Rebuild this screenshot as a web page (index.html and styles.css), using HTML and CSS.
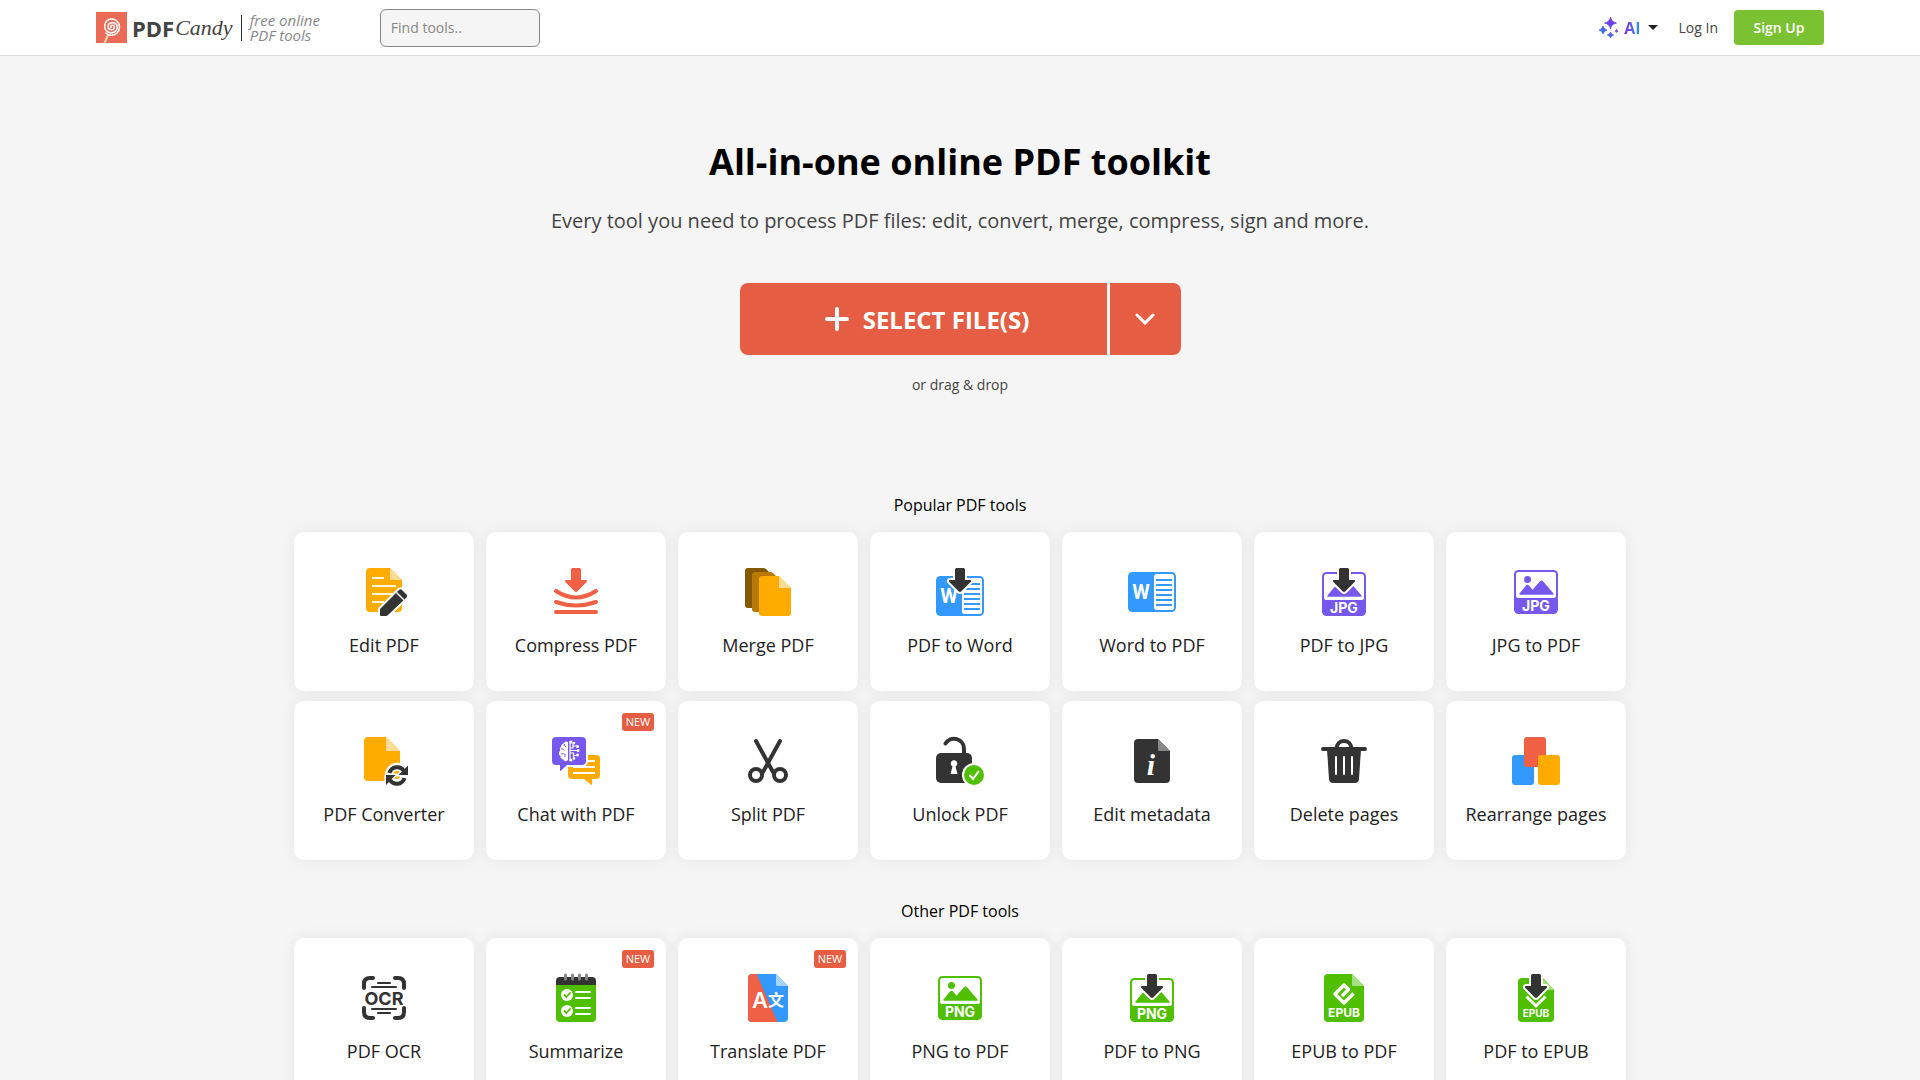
FILE: index.html
```html
<!DOCTYPE html>
<html lang="en">
<head>
    <meta charset="UTF-8">
    <meta name="viewport" content="width=device-width, initial-scale=1.0">
    <title>PDF Candy - All-in-one online PDF toolkit</title>
    <link rel="stylesheet" href="styles.css">
</head>
<body>
    <!-- shared icon parts -->
    <svg class="defs" width="0" height="0" aria-hidden="true">
        <defs>
            <linearGradient id="ai-grad" x1="1" y1="0" x2="0" y2="1">
                <stop offset="0" stop-color="#8a2be2"/>
                <stop offset=".5" stop-color="#5b4bea"/>
                <stop offset="1" stop-color="#1e9be8"/>
            </linearGradient>
            <symbol id="arrow" viewBox="0 0 48 48">
                <path d="M20.500 0h7q1.500 0 1.500 1.500V12h5q2 .4 .6 2L25.400 23.300q-1.400 1.400-2.800 0L13.400 14q-1.400-1.600 .6-2h5V1.500Q19 0 20.500 0z"/>
            </symbol>
            <symbol id="word" viewBox="0 0 48 48">
                <rect y="4" width="48" height="40" rx="4.500" fill="#39f"/>
                <rect x="26" y="6" width="20" height="36" rx="2.500" fill="#fff"/>
                <path d="M28 12h16M28 17h16M28 22h16M28 27h16M28 32h16M28 37h16" stroke="#39f" stroke-width="2"/>
                <text x="13" y="31" class="t-word">W</text>
            </symbol>
            <symbol id="picture" viewBox="0 0 48 48">
                <rect x="2" y="2" width="44" height="44" rx="4.500" fill="currentColor"/>
                <rect x="4" y="4" width="40" height="26" rx="2.500" fill="#fff"/>
                <circle cx="15.500" cy="11.500" r="3.500" fill="currentColor"/>
                <path d="M8.500 26.700q-2 0-.8-1.500L14 17.500q1.500-1.500 3 0l3.500 4.300L28 13.300q1.500-1.600 3 0l10.300 11.900q1.200 1.500-.8 1.500z" fill="currentColor"/>
            </symbol>
        </defs>
    </svg>

    <header class="header">
        <a class="logo" href="#">
            <svg width="31" height="31" viewBox="0 0 31 31" fill="none" aria-hidden="true">
                <rect width="31" height="31" fill="#ec6b56"/>
                <path d="M12 23L8.500 31" stroke="#f9d9b0" stroke-width="2"/>
                <path d="M15 15.500c-1-2.500 2.800-3.500 3.300-.5.400 3.500-6 4-6.300-.4C11.800 9.500 20.800 9 21.200 15c.2 5-6 7.500-9.700 4.700-5-3.600-3-12.200 3.700-12.700 4.600-.2 8.300 3.500 8.300 8 0 4.800-3.800 8.300-8.300 8.300-2 0-4-.8-5.500-2.300" stroke="#fff" stroke-width="1.500" stroke-linecap="round"/>
            </svg>
            <span class="logo-pdf">PDF</span>
            <span class="logo-candy">Candy</span>
            <span class="divider"></span>
            <span class="slogan">free online<br>PDF tools</span>
        </a>
        <input class="search" type="search" placeholder="Find tools.." aria-label="Find tools">
        <nav class="user-menu">
            <button class="ai-btn" type="button">
                <svg width="20" height="22" viewBox="0 0 20 22" fill="url(#ai-grad)" aria-hidden="true">
                    <path d="M11.500 0Q12.300 5.200 17.500 6 12.300 6.800 11.500 12 10.700 6.800 5.500 6 10.700 5.200 11.500 0zM4 9Q4.800 12.200 8 13 4.800 13.800 4 17 3.200 13.800 0 13 3.200 12.200 4 9zM11.500 15Q12 17.500 14.500 18 12 18.500 11.500 21 11 18.500 8.500 18 11 17.500 11.500 15zM17.500 12.500Q17.800 13.700 19 14 17.800 14.300 17.500 15.500 17.200 14.300 16 14 17.200 13.700 17.500 12.500z" stroke="url(#ai-grad)" stroke-width=".8" stroke-linejoin="round"/>
                </svg>
                <span class="ai-text">AI</span>
                <span class="caret"></span>
            </button>
            <a class="login" href="#">Log In</a>
            <button class="signup" type="button">Sign Up</button>
        </nav>
    </header>

    <main>
        <section class="hero">
            <h1>All-in-one online PDF toolkit</h1>
            <p class="subtitle">Every tool you need to process PDF files: edit, convert, merge, compress, sign and more.</p>
            <div class="upload">
                <button class="select-files" type="button">
                    <svg width="24" height="24" viewBox="0 0 24 24" aria-hidden="true"><path d="M12 2v20M2 12h20" stroke="#fff" stroke-width="4" stroke-linecap="round"/></svg>
                    SELECT FILE(S)
                </button>
                <button class="select-more" type="button" aria-label="More sources">
                    <svg width="20" height="12" viewBox="0 0 20 12" fill="none" aria-hidden="true"><path d="M2 2l8 8 8-8" stroke="#fff" stroke-width="3" stroke-linecap="round"/></svg>
                </button>
            </div>
            <p class="drop-hint">or drag &amp; drop</p>
        </section>

        <section class="tools">
            <h2>Popular PDF tools</h2>
            <div class="grid">
                <a class="tool" href="#">
                    <svg class="icon" viewBox="0 0 48 48">
                        <path d="M10 0h20l12 12v28a4 4 0 0 1-4 4H10a4 4 0 0 1-4-4V4a4 4 0 0 1 4-4z" fill="#ffab00"/>
                        <path d="M30 0l12 12H31q-1 0-1-1z" fill="#ffdc96"/>
                        <path d="M12 10h12M12 18h24M12 26h24M12 34h12" stroke="#fff8d8" stroke-width="2"/>
                        <path d="M20 47v-6l19-19q1.500-1.500 3 0l4.500 4.500q1.500 1.500 0 3L28 47q-1 1-2 1h-5q-1 0-1-1z" fill="#333" stroke="#fff" stroke-width="4" paint-order="stroke"/>
                        <path d="M36.500 24.500l7.500 7.500" stroke="#fff" stroke-width="1.500"/>
                    </svg>
                    <span>Edit PDF</span>
                </a>
                <a class="tool" href="#">
                    <svg class="icon" viewBox="0 0 48 48" fill="none">
                        <use href="#arrow" fill="#f06045"/>
                        <path d="M4 23Q24 36 44 23M4 34q20 7 40 0M4 44h40" stroke="#f06045" stroke-width="4" stroke-linecap="round"/>
                    </svg>
                    <span>Compress PDF</span>
                </a>
                <a class="tool" href="#">
                    <svg class="icon" viewBox="0 0 48 48">
                        <path d="M4 0h15q2 0 3 1l11 11v28H4a3 3 0 0 1-3-3V3a3 3 0 0 1 3-3z" fill="#855800"/>
                        <path d="M11 4h15q2 0 3 1l11 11v28H11a3 3 0 0 1-3-3V7a3 3 0 0 1 3-3z" fill="#b87900"/>
                        <path d="M18 8h17l12 12v25a3 3 0 0 1-3 3H18a3 3 0 0 1-3-3V11a3 3 0 0 1 3-3z" fill="#ffab00"/>
                        <path d="M35 8l12 12H36q-1 0-1-1z" fill="#ffdc96"/>
                    </svg>
                    <span>Merge PDF</span>
                </a>
                <a class="tool" href="#">
                    <svg class="icon" viewBox="0 0 48 48">
                        <use href="#word" y="4"/>
                        <use href="#arrow" class="dark-arrow"/>
                    </svg>
                    <span>PDF to Word</span>
                </a>
                <a class="tool" href="#">
                    <svg class="icon" viewBox="0 0 48 48"><use href="#word"/></svg>
                    <span>Word to PDF</span>
                </a>
                <a class="tool" href="#">
                    <svg class="icon purple" viewBox="0 0 48 48">
                        <use href="#picture" y="2"/>
                        <text x="24" y="45" class="t-pic">JPG</text>
                        <use href="#arrow" class="dark-arrow"/>
                    </svg>
                    <span>PDF to JPG</span>
                </a>
                <a class="tool" href="#">
                    <svg class="icon purple" viewBox="0 0 48 48">
                        <use href="#picture"/>
                        <text x="24" y="43" class="t-pic">JPG</text>
                    </svg>
                    <span>JPG to PDF</span>
                </a>
                <a class="tool" href="#">
                    <svg class="icon" viewBox="0 0 48 48">
                        <path d="M8 0h18l14 14v26a4 4 0 0 1-4 4H8a4 4 0 0 1-4-4V4a4 4 0 0 1 4-4z" fill="#ffab00"/>
                        <path d="M26 0l14 14H27q-1 0-1-1z" fill="#ffdc96"/>
                        <g stroke="#fff" stroke-width="8" fill="none"><path d="M29 37a8 8 0 0 1 15-3M44.500 39a8 8 0 0 1-15 3"/></g>
                        <path d="M48 28.500v9.500h-9.500zM26 48v-10h9.500z" fill="#333" stroke="#fff" stroke-width="3" paint-order="stroke"/>
                        <path d="M29.500 36a8 8 0 0 1 14.500-2M44.500 41a8 8 0 0 1-14.500 2" fill="none" stroke="#333" stroke-width="4"/>
                    </svg>
                    <span>PDF Converter</span>
                </a>
                <a class="tool" href="#">
                    <em class="badge">NEW</em>
                    <svg class="icon" viewBox="0 0 48 48" fill="none">
                        <path d="M20 18h24a4 4 0 0 1 4 4v16a4 4 0 0 1-4 4h-4v5q0 1.500-1.200.6L32 42H20a4 4 0 0 1-4-4V22a4 4 0 0 1 4-4z" fill="#ffab00"/>
                        <path d="M21 24h22M21 30h22M21 36h22" stroke="#fff" stroke-width="2"/>
                        <path d="M4 0h26a4 4 0 0 1 4 4v20a4 4 0 0 1-4 4H15l-5.800 5.500Q8 34.500 8 33v-5H4a4 4 0 0 1-4-4V4a4 4 0 0 1 4-4z" fill="#7659ec" stroke="#fff" stroke-width="4" paint-order="stroke"/>
                        <path d="M16 5v18q-2 2-4 .5-.5-1.500-2-1.500-2-.5-1.500-3-2-1-1.500-3 .2-1.500 1-2-.8-3 1-4 0-3 2.500-3.500Q13.500 3.500 16 5z" fill="#fff"/>
                        <path d="M12.500 7q-.5 2 1.500 3M9 12q2-1 3 1.500M9 17q2.500-1 4 .5M13 20q-1-1.500 1-2.500" stroke="#7659ec"/>
                        <path d="M18 4v20M18 11h3V6M18 13.500h8M18 16h3.500v5M21 9h4M21 18.500h4" stroke="#fff" stroke-width="1.200"/>
                        <g fill="#fff"><circle cx="19" cy="5" r="1.500"/><circle cx="22" cy="6" r="1.300"/><circle cx="25.500" cy="9.500" r="1.500"/><circle cx="26" cy="13.500" r="1.500"/><circle cx="25.500" cy="18" r="1.500"/><circle cx="22" cy="21.500" r="1.300"/><circle cx="19" cy="23" r="1.500"/></g>
                    </svg>
                    <span>Chat with PDF</span>
                </a>
                <a class="tool" href="#">
                    <svg class="icon" viewBox="0 0 48 48" fill="none" stroke="#333" stroke-width="4" stroke-linecap="round">
                        <path d="M12 4l17 31M36 4L19 35"/>
                        <circle cx="12" cy="38" r="6"/><circle cx="36" cy="38" r="6"/>
                    </svg>
                    <span>Split PDF</span>
                </a>
                <a class="tool" href="#">
                    <svg class="icon" viewBox="0 0 48 48" fill="none" stroke-linecap="round">
                        <rect y="16" width="36" height="30" rx="5" fill="#333"/>
                        <path d="M28 18v-6A10 10 0 0 0 9.500 6.500" stroke="#333" stroke-width="4"/>
                        <path d="M16.500 29.500a3.300 3.300 0 1 1 3 0l2 7.500h-7z" fill="#fff"/>
                        <circle cx="38" cy="38" r="12" fill="#fff"/>
                        <circle cx="38" cy="38" r="10" fill="#4fbf00"/>
                        <path d="M34 38.500l3 3.500 5.500-7.500" stroke="#fff" stroke-width="2"/>
                    </svg>
                    <span>Unlock PDF</span>
                </a>
                <a class="tool" href="#">
                    <svg class="icon" viewBox="0 0 48 48">
                        <path d="M10 2h20l12 12v28a4 4 0 0 1-4 4H10a4 4 0 0 1-4-4V6a4 4 0 0 1 4-4z" fill="#333"/>
                        <path d="M30 2l12 12H31q-1 0-1-1z" fill="#888"/>
                        <text x="23" y="38" class="t-info">i</text>
                    </svg>
                    <span>Edit metadata</span>
                </a>
                <a class="tool" href="#">
                    <svg class="icon" viewBox="0 0 48 48" fill="none" stroke-linecap="round">
                        <path d="M3 12h42M16.500 11c1-9.500 14-9.500 15 0" stroke="#333" stroke-width="4"/>
                        <path d="M7 12h34l-2 30q-.4 4-4 4H13q-3.600 0-4-4z" fill="#333"/>
                        <path d="M16 20v17M24 20v17M32 20v17" stroke="#fff" stroke-width="2"/>
                    </svg>
                    <span>Delete pages</span>
                </a>
                <a class="tool" href="#">
                    <svg class="icon" viewBox="0 0 48 48">
                        <rect y="18" width="22" height="30" rx="3" fill="#39f"/>
                        <rect x="12" width="22" height="30" rx="3" fill="#f06045"/>
                        <rect x="26" y="18" width="22" height="30" rx="3" fill="#ffab00"/>
                    </svg>
                    <span>Rearrange pages</span>
                </a>
            </div>
        </section>

        <section class="tools">
            <h2>Other PDF tools</h2>
            <div class="grid">
                <a class="tool" href="#">
                    <svg class="icon" viewBox="0 0 48 48" stroke-linecap="round">
                        <path d="M4 14v-4q0-6 6-6h3M35 4h3q6 0 6 6v4M4 34v4q0 6 6 6h3M35 44h3q6 0 6-6v-4" fill="none" stroke="#333" stroke-width="4"/>
                        <path d="M18 9h12M12 13h24M12 35h24M18 39h12" stroke="#333" stroke-width="2"/>
                        <text x="24" y="31" class="t-ocr">OCR</text>
                    </svg>
                    <span>PDF OCR</span>
                </a>
                <a class="tool" href="#">
                    <em class="badge">NEW</em>
                    <svg class="icon" viewBox="0 0 48 48" fill="none" stroke-linecap="round">
                        <path d="M4 11V7a4 4 0 0 1 4-4h32a4 4 0 0 1 4 4v4z" fill="#333"/>
                        <path d="M4 11h40v33a4 4 0 0 1-4 4H8a4 4 0 0 1-4-4z" fill="#4fbf00"/>
                        <path d="M13.500 1v4M20.500 1v4M27.500 1v4M34.500 1v4" stroke="#888" stroke-width="3"/>
                        <circle cx="15" cy="21" r="6" fill="#fff"/><circle cx="15" cy="37" r="6" fill="#fff"/>
                        <path d="M12.500 21l2 2 3.500-4M12.500 37l2 2 3.500-4" stroke="#4fbf00" stroke-width="1.800"/>
                        <path d="M24 18h14M24 24h14M24 34h14M24 40h14" stroke="#fff" stroke-width="2"/>
                    </svg>
                    <span>Summarize</span>
                </a>
                <a class="tool" href="#">
                    <em class="badge">NEW</em>
                    <svg class="icon" viewBox="0 0 48 48">
                        <path d="M8 0h24l12 12v32a4 4 0 0 1-4 4H8a4 4 0 0 1-4-4V4a4 4 0 0 1 4-4z" fill="#39f"/>
                        <path d="M8 0h4.500l21 48H8a4 4 0 0 1-4-4V4a4 4 0 0 1 4-4z" fill="#f06045"/>
                        <path d="M32 0l12 12H33q-1 0-1-1z" fill="#a8d2ff"/>
                        <text x="16" y="34" class="t-latin">A</text>
                        <text x="32" y="32" class="t-cjk">文</text>
                    </svg>
                    <span>Translate PDF</span>
                </a>
                <a class="tool" href="#">
                    <svg class="icon green" viewBox="0 0 48 48">
                        <use href="#picture"/>
                        <text x="24" y="43" class="t-pic">PNG</text>
                    </svg>
                    <span>PNG to PDF</span>
                </a>
                <a class="tool" href="#">
                    <svg class="icon green" viewBox="0 0 48 48">
                        <use href="#picture" y="2"/>
                        <text x="24" y="45" class="t-pic">PNG</text>
                        <use href="#arrow" class="dark-arrow"/>
                    </svg>
                    <span>PDF to PNG</span>
                </a>
                <a class="tool" href="#">
                    <svg class="icon" viewBox="0 0 48 48">
                        <path d="M8 0h24l12 12v32a4 4 0 0 1-4 4H8a4 4 0 0 1-4-4V4a4 4 0 0 1 4-4z" fill="#4fbf00"/>
                        <path d="M32 0l12 12H33q-1 0-1-1z" fill="#a7df80"/>
                        <path d="M22 22l6.500-6.500L24 11l-9 9 9 9 9.500-9.500" fill="none" stroke="#fff" stroke-width="3.500" stroke-linejoin="round"/>
                        <text x="24" y="43" class="t-epub">EPUB</text>
                    </svg>
                    <span>EPUB to PDF</span>
                </a>
                <a class="tool" href="#">
                    <svg class="icon" viewBox="0 0 48 48">
                        <path d="M10 4h21l11 12v28a4 4 0 0 1-4 4H10a4 4 0 0 1-4-4V8a4 4 0 0 1 4-4z" fill="#4fbf00"/>
                        <path d="M31 5l11 11H31z" fill="#a7df80"/>
                        <path d="M14.500 22.500L24 32l9.500-9.500" fill="none" stroke="#fff" stroke-width="3"/>
                        <text x="24" y="43" class="t-epub small">EPUB</text>
                        <use href="#arrow" class="dark-arrow"/>
                    </svg>
                    <span>PDF to EPUB</span>
                </a>
            </div>
        </section>
    </main>
</body>
</html>
```
FILE: styles.css
```css
:root {
    --red: #e55d43;
    --green: #7ac231;
    --background: #f5f5f5;
}

* {
    box-sizing: border-box;
}

body {
    margin: 0;
    font-family: "Open Sans", sans-serif;
    color: #222;
    background: var(--background);
}

button {
    font-family: inherit;
    border: none;
    cursor: pointer;
}

a {
    color: inherit;
    text-decoration: none;
}

.defs {
    position: absolute;
}

/* header */
.header {
    display: flex;
    align-items: center;
    height: 56px;
    padding: 0 5%;
    background: #fff;
    border-bottom: 1px solid #ddd;
}

.logo {
    display: flex;
    align-items: center;
    color: #444;
}

.logo-pdf {
    margin-left: 5px;
    font-size: 22px;
    font-weight: 700;
}

.logo-candy {
    margin-left: 1px;
    font-family: "Liberation Serif", serif;
    font-size: 22px;
    font-style: italic;
}

.divider {
    width: 1px;
    height: 26px;
    margin: 0 8px;
    background: #333;
}

.slogan {
    font-size: 15px;
    line-height: 15px;
    font-style: italic;
    color: #888;
}

.search {
    width: 160px;
    height: 38px;
    margin-left: 60px;
    padding: 0 10px;
    border: 1px solid #888;
    border-radius: 6px;
    background: var(--background);
    font-family: inherit;
    font-size: 14px;
}

.search::placeholder {
    color: #888;
}

.user-menu {
    display: flex;
    align-items: center;
    margin-left: auto;
    font-size: 14px;
    color: #444;
}

.ai-btn {
    display: flex;
    align-items: center;
    gap: 5px;
    margin-right: 21px;
    padding: 0;
    background: none;
}

.ai-text {
    font-size: 16px;
    font-weight: 700;
    color: transparent;
    background: linear-gradient(90deg, #8a2be2, #1ea0e8);
    -webkit-background-clip: text;
    background-clip: text;
}

.caret {
    margin-left: 2px;
    border: 5px solid transparent;
    border-top-color: #222;
    border-bottom: 0;
}

.signup {
    width: 90px;
    height: 35px;
    margin-left: 16px;
    border-radius: 4px;
    background: var(--green);
    color: #fff;
    font-size: 14px;
    font-weight: 600;
}

/* hero */
.hero {
    padding-top: 80px;
    text-align: center;
}

h1 {
    margin: 0;
    font-size: 36px;
    line-height: 52px;
    color: #000;
}

.subtitle {
    margin: 18px 0 47px;
    font-size: 20px;
    line-height: 30px;
    color: #444;
}

.upload {
    display: flex;
    justify-content: center;
    gap: 3px;
}

.select-files,
.select-more {
    display: flex;
    align-items: center;
    justify-content: center;
    height: 72px;
    background: var(--red);
}

.select-files {
    gap: 14px;
    width: 367px;
    padding: 0 0 0 8px;
    border-radius: 8px 0 0 8px;
    color: #fff;
    font-size: 24px;
    font-weight: 700;
}

.select-more {
    width: 71px;
    border-radius: 0 8px 8px 0;
}

.drop-hint {
    margin: 20px 0 98px;
    font-size: 14px;
    line-height: 20px;
    color: #444;
}

/* tools */
.tools {
    padding: 0 20px;
    margin-bottom: 39px;
}

h2 {
    margin: 0 0 15px;
    font-size: 16px;
    line-height: 24px;
    font-weight: 400;
    text-align: center;
    color: #000;
}

.grid {
    display: grid;
    grid-template-columns: repeat(auto-fit, 180px);
    justify-content: center;
    gap: 10px 12px;
    max-width: 1332px;
    margin: 0 auto;
}

.tool {
    position: relative;
    display: flex;
    flex-direction: column;
    align-items: center;
    gap: 16px;
    height: 159px;
    padding-top: 36px;
    border-radius: 10px;
    background: #fff;
    box-shadow: 0 0 15px rgba(0, 20, 20, 0.07);
    font-size: 18px;
    line-height: 26px;
}

.badge {
    position: absolute;
    top: 12px;
    right: 12px;
    width: 32px;
    border-radius: 3px;
    background: var(--red);
    color: #fff;
    font-size: 11px;
    line-height: 18px;
    font-style: normal;
    text-align: center;
}

/* icons */
.icon {
    width: 48px;
    height: 48px;
    overflow: visible;
}

.icon text,
.t-word {
    fill: #fff;
    font-family: Inter, sans-serif;
    font-weight: 700;
    text-anchor: middle;
}

.dark-arrow {
    fill: #333;
    stroke: #fff;
    stroke-width: 4px;
    paint-order: stroke;
}

.purple {
    color: #7659ec;
}

.green {
    color: #4fbf00;
}

.t-word {
    font-family: Roboto, sans-serif;
    font-size: 20px;
}

.t-pic {
    font-size: 14px;
}

.t-epub {
    font-size: 12px;
}

.t-epub.small {
    font-size: 10px;
}

.icon .t-ocr {
    font-size: 18px;
    fill: #333;
}

.icon .t-info {
    font-family: "Liberation Serif", serif;
    font-size: 30px;
    font-style: italic;
}

.icon .t-latin {
    font-size: 22px;
    font-weight: 600;
}

.icon .t-cjk {
    font-family: "Noto Sans CJK SC", sans-serif;
    font-size: 16px;
}

@media (max-width: 800px) {
    .divider,
    .slogan {
        display: none;
    }

    .search {
        margin-left: 16px;
    }
}
```
